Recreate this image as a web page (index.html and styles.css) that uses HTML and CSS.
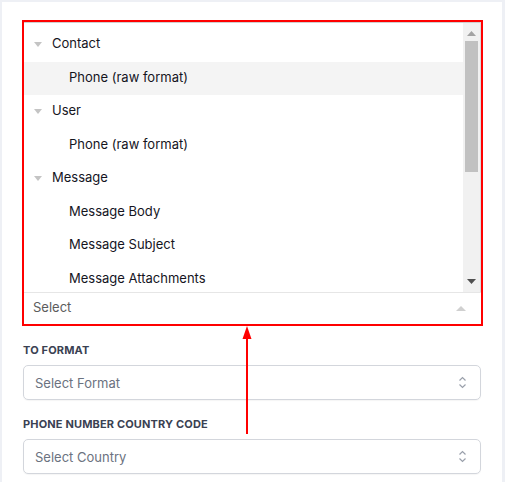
FILE: index.html
```html
<!DOCTYPE html>
<html>
<head>
<meta charset="utf-8">
<link rel="stylesheet" href="styles.css">
</head>
<body>
<div class="panel">
  <div class="annot">
    <div class="list">
      <div class="items">
        <div class="row group"><svg class="caret" width="8" height="5" viewBox="0 0 8 5"><polygon points="0,0 8,0 4,5"/></svg><span>Contact</span></div>
        <div class="row child active"><span>Phone (raw format)</span></div>
        <div class="row group"><svg class="caret" width="8" height="5" viewBox="0 0 8 5"><polygon points="0,0 8,0 4,5"/></svg><span>User</span></div>
        <div class="row child"><span>Phone (raw format)</span></div>
        <div class="row group"><svg class="caret" width="8" height="5" viewBox="0 0 8 5"><polygon points="0,0 8,0 4,5"/></svg><span>Message</span></div>
        <div class="row child"><span>Message Body</span></div>
        <div class="row child"><span>Message Subject</span></div>
        <div class="row child"><span>Message Attachments</span></div>
      </div>
      <div class="scrollbar">
        <svg class="sb-up" width="9" height="5" viewBox="0 0 9 5"><polygon points="0,5 9,5 4.5,0"/></svg>
        <div class="thumb"></div>
        <div class="spacer"></div>
        <svg class="sb-down" width="9" height="5" viewBox="0 0 9 5"><polygon points="0,0 9,0 4.5,5"/></svg>
      </div>
    </div>
    <div class="select-row">
      <span>Select</span>
      <svg class="sel-caret" width="10" height="5" viewBox="0 0 10 5"><polygon points="0,5 10,5 5,0"/></svg>
    </div>
  </div>

  <div class="label">TO FORMAT</div>
  <div class="input"><span>Select Format</span>
    <svg class="updown" width="9" height="13" viewBox="0 0 9 13"><path d="M1.5 4.5 L4.5 1.5 L7.5 4.5 M1.5 8.5 L4.5 11.5 L7.5 8.5"/></svg>
  </div>

  <div class="label">PHONE NUMBER COUNTRY CODE</div>
  <div class="input"><span>Select Country</span>
    <svg class="updown" width="9" height="13" viewBox="0 0 9 13"><path d="M1.5 4.5 L4.5 1.5 L7.5 4.5 M1.5 8.5 L4.5 11.5 L7.5 8.5"/></svg>
  </div>

  <svg class="arrow" width="10" height="110" viewBox="0 0 10 110"><polygon points="5,0 9.5,13 0.5,13" fill="#ff0000"/><rect x="4" y="10" width="2" height="98" fill="#ff0000"/></svg>
</div>
</body>
</html>
```
FILE: styles.css
```css
* { box-sizing: border-box; }
html, body { margin: 0; padding: 0; }
body {
  background: #eef0f5;
  width: 505px;
  height: 482px;
  overflow: hidden;
  font-family: Inter, "Noto Sans", sans-serif;
}
.panel {
  position: relative;
  margin: 2px 3px 0 2px;
  height: 480px;
  background: #ffffff;
  padding: 18px 21px 0 21px;
}
.annot {
  width: 461px;
  margin-left: -1px;
  border: 2px solid #ff0000;
  background: #fff;
}
.list {
  display: flex;
  height: 270px;
  border-top: 1px solid #cfcfcf;
  border-right: 1px solid #d9d9d9;
}
.items {
  flex: 1;
  padding-top: 5px;
  overflow: hidden;
}
.row {
  height: 33.5px;
  display: flex;
  align-items: center;
  font-size: 13px;
  color: #15151e;
  padding-bottom: 3px;
}
.row.group { padding-left: 10px; }
.row.child { padding-left: 45px; }
.row.active { background: #f4f4f4; }
.caret { fill: #c4c4c4; margin-right: 10px; margin-top: 3px; }
.scrollbar {
  width: 17px;
  background: #f1f1f1;
  display: flex;
  flex-direction: column;
  align-items: center;
}
.sb-up { fill: #a3a3a3; margin-top: 8px; flex: none; }
.thumb {
  width: 13px;
  height: 131px;
  background: #c1c1c1;
  margin-top: 5px;
  flex: none;
}
.spacer { flex: 1; }
.sb-down { fill: #505050; margin-bottom: 8px; flex: none; }
.select-row {
  height: 32px;
  border-top: 1px solid #e6e6e6;
  display: flex;
  align-items: center;
  justify-content: space-between;
  padding: 0 15px 3px 9px;
  font-size: 13px;
  color: #5c5c5c;
}
.sel-caret { fill: #d0d0d0; margin-top: 2px; }
.label {
  margin-top: 17px;
  font-size: 11px;
  line-height: 14px;
  font-weight: 700;
  color: #3a4152;
  letter-spacing: 0.15px;
}
.input {
  margin-top: 8px;
  height: 35px;
  border: 1px solid #d3d6dc;
  border-radius: 5px;
  display: flex;
  align-items: center;
  justify-content: space-between;
  padding: 0 13px 0 11px;
  font-size: 13px;
  color: #6b7280;
  box-shadow: 0 1px 1px rgba(0,0,0,0.04);
}
.updown { fill: none; stroke: #9aa0ab; stroke-width: 1.2; }
.arrow {
  position: absolute;
  left: 240px;
  top: 324px;
}
```
